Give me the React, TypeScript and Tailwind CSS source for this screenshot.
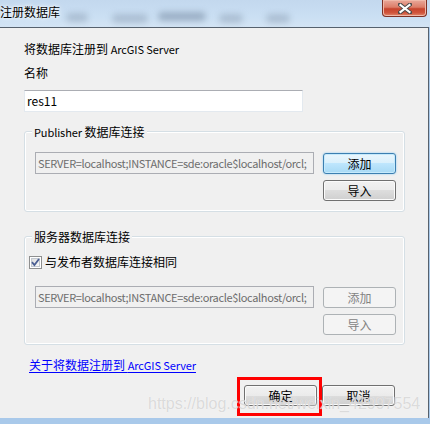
import type { ReactNode } from 'react'

const fieldValue = 'SERVER=localhost;INSTANCE=sde:oracle$localhost/orcl;'

type ButtonKind = 'normal' | 'focused' | 'disabled'

const buttonStyles: Record<ButtonKind, string> = {
  normal:
    'border-[#707070] text-black bg-[linear-gradient(#f2f2f2_0%,#ebebeb_50%,#dddddd_50%,#cfcfcf_100%)] shadow-[inset_0_0_0_1px_#fbfbfb]',
  focused:
    'border-[#3c7fb1] text-black bg-[linear-gradient(#eaf6fd_0%,#d9f0fc_50%,#bee6fd_50%,#a7d9f5_100%)] shadow-[inset_0_0_0_1px_#c6eafc,0_0_2px_#7fc7f2]',
  disabled: 'border-[#adb2b5] text-[#838383] bg-[#f4f4f4]',
}

// latin runs are a bit narrower in the original (Segoe-like)
const Latin = ({ children }: { children: ReactNode }) => (
  <span className="text-[11px] tracking-[-0.1px]">{children}</span>
)

function WinButton({ kind = 'normal', children }: { kind?: ButtonKind; children: ReactNode }) {
  return (
    <div
      className={`flex h-[21px] w-[73px] items-center justify-center rounded-[3px] border ${buttonStyles[kind]}`}
    >
      {children}
    </div>
  )
}

function ConnField() {
  return (
    <div className="flex h-[22px] w-[279px] items-center overflow-hidden whitespace-nowrap border border-[#abadb3] bg-[#f0f0f0] pl-[2px] text-[11px] tracking-[-0.35px] text-[#6d6d6d]">
      {fieldValue}
    </div>
  )
}

function GroupBox({ title, height, children }: { title: ReactNode; height: string; children: ReactNode }) {
  return (
    <div className={`relative w-[381px] rounded-[3px] border border-[#d5dfe5] shadow-[inset_0_0_0_1px_#fff] ${height}`}>
      <span className="absolute -top-[8px] left-[7px] bg-[#f0f0f0] px-[2px]">{title}</span>
      {children}
    </div>
  )
}

function ConnRow({ disabled }: { disabled?: boolean }) {
  return (
    <div className="flex gap-[9px] pl-[10px]">
      <ConnField />
      <div className="mt-[1px] flex flex-col gap-[6px]">
        <WinButton kind={disabled ? 'disabled' : 'focused'}>添加</WinButton>
        <WinButton kind={disabled ? 'disabled' : 'normal'}>导入</WinButton>
      </div>
    </div>
  )
}

function TitleBar() {
  return (
    <div className="relative flex h-[27px] shrink-0 bg-[linear-gradient(#c3d8ee,#cadff3_60%,#d3e4f4)]">
      {/* blurred glass behind the caption */}
      <div className="absolute left-[66px] top-[13px] h-[9px] w-[22px] rounded-full bg-[#6f8298]/35 blur-[3px]" />
      <div className="absolute left-[112px] top-[14px] h-[9px] w-[36px] rounded-full bg-[#6f8298]/35 blur-[3px]" />
      <div className="absolute left-[158px] top-[12px] h-[9px] w-[48px] rounded-full bg-[#566a82]/40 blur-[3px]" />
      <div className="absolute left-[219px] top-[14px] h-[9px] w-[24px] rounded-full bg-[#6f8298]/35 blur-[3px]" />
      <div className="absolute left-[266px] top-[14px] h-[9px] w-[24px] rounded-full bg-[#6f8298]/35 blur-[3px]" />
      <span className="relative mt-[4px] text-[12px] leading-[16px] [text-shadow:0_0_6px_#fff,0_0_3px_#fff]">
        注册数据库
      </span>
      <div className="relative ml-auto mr-[3px] flex h-[17px] w-[45px] items-center justify-center rounded-b-[4px] border border-t-0 border-[#7d3125] bg-[linear-gradient(#e9a99b_0%,#dc7d68_45%,#c6442d_55%,#d0553c_80%,#e28a6e_100%)] shadow-[inset_0_0_0_1px_#f0b9a9]">
        <svg width="14" height="11" viewBox="0 0 14 11">
          <path
            d="M2 1.5 L12 9.5 M12 1.5 L2 9.5"
            stroke="#4a4a4a"
            strokeWidth="4"
            strokeLinecap="square"
          />
          <path
            d="M2.5 2 L11.5 9 M11.5 2 L2.5 9"
            stroke="#ffffff"
            strokeWidth="2.2"
            strokeLinecap="square"
          />
        </svg>
      </div>
    </div>
  )
}

export default function App() {
  return (
    <div className="relative flex h-[424px] w-[430px] flex-col overflow-hidden bg-[#a9c9ea] font-['Noto_Sans_CJK_SC','Noto_Sans',sans-serif] text-[12px] leading-[16px] text-black">
      <TitleBar />
      <div className="h-[391px] w-[429px] shrink-0 border-r border-t border-[#56616d] bg-[#f0f0f0] pl-[24px] pt-[13px]">
        <div>
          将数据库注册到 <Latin>ArcGIS Server</Latin>
        </div>
        <div className="mt-[8px]">名称</div>
        <div className="mt-[9px] flex h-[22px] w-[279px] items-center border border-[#e3e9ef] border-t-[#abadb3] bg-white pl-[2px]">
          res11
        </div>

        <div className="mt-[19px]">
          <GroupBox
            title={
              <>
                <Latin>Publisher</Latin> 数据库连接
              </>
            }
            height="h-[81px]"
          >
            <div className="pt-[20px]">
              <ConnRow />
            </div>
          </GroupBox>
        </div>

        <div className="mt-[24px]">
          <GroupBox title="服务器数据库连接" height="h-[109px]">
            <div className="flex items-center gap-[3px] pl-[4px] pt-[17px]">
              <svg width="13" height="13" viewBox="0 0 13 13">
                <defs>
                  <linearGradient id="cb" x1="0" y1="0" x2="1" y2="1">
                    <stop offset="0" stopColor="#dcdcdc" />
                    <stop offset="1" stopColor="#fafafa" />
                  </linearGradient>
                </defs>
                <rect x="0.5" y="0.5" width="12" height="12" fill="#fff" stroke="#8e8f8f" />
                <rect x="2.5" y="2.5" width="8" height="8" fill="url(#cb)" stroke="#c2c8d0" />
                <path d="M3 6.2 L5.4 9 L10 3" fill="none" stroke="#4b5f93" strokeWidth="1.8" />
              </svg>
              <span>与发布者数据库连接相同</span>
            </div>
            <div className="mt-[16px]">
              <ConnRow disabled />
            </div>
          </GroupBox>
        </div>

        <div className="ml-[5px] mt-[12px]">
          <span className="text-[#0000ff] underline underline-offset-2">
            关于将数据注册到 <Latin>ArcGIS Server</Latin>
          </span>
        </div>

        <div className="mt-[12px] flex w-[371px] justify-end gap-[5px]">
          <div className="relative">
            <WinButton>确定</WinButton>
            <div className="absolute -left-[7px] -top-[8px] h-[39px] w-[85px] border-[3px] border-[#ff0000]" />
          </div>
          <WinButton>取消</WinButton>
        </div>
      </div>

      <span className="pointer-events-none absolute left-[148px] top-[395px] font-['Liberation_Sans',sans-serif] text-[16px] leading-[18px] text-[#bdbdbd]/55 [text-shadow:0_0_1px_#fff]">
        https://blog.csdn.net/weixin_42997554
      </span>
    </div>
  )
}
